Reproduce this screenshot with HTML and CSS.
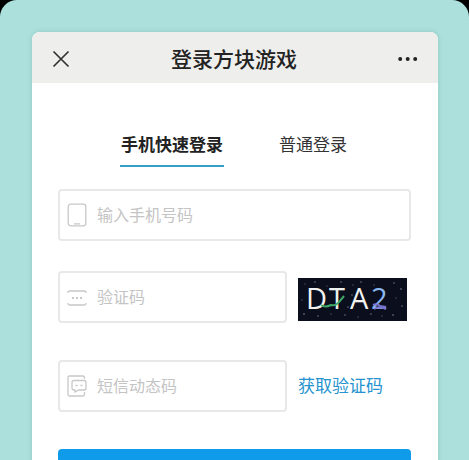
FILE: index.html
```
<!DOCTYPE html>
<html lang="zh-CN">
<head>
    <meta charset="UTF-8">
    <meta name="viewport" content="width=device-width, initial-scale=1.0">
    <title>登录方块游戏</title>
    <link rel="stylesheet" href="styles.css">
</head>
<body>
    <div class="page">
        <main class="card">
            <header class="card-header">
                <button type="button" class="icon-button" aria-label="关闭">
                    <svg width="18" height="18" viewBox="0 0 18 18" fill="none" stroke="#333" stroke-width="1.7">
                        <path d="M1.5 1.5L16.5 16.5M16.5 1.5L1.5 16.5"/>
                    </svg>
                </button>
                <h1>登录方块游戏</h1>
                <button type="button" class="icon-button" aria-label="更多">
                    <svg width="20" height="6" viewBox="0 0 20 6" fill="#222">
                        <circle cx="2.2" cy="3" r="2"/>
                        <circle cx="9.7" cy="3" r="2"/>
                        <circle cx="17.2" cy="3" r="2"/>
                    </svg>
                </button>
            </header>

            <nav class="tabs">
                <a href="#phone" class="tab active">手机快速登录</a>
                <a href="#normal" class="tab">普通登录</a>
            </nav>

            <form class="login-form">
                <div class="row">
                    <div class="field">
                        <label for="phone" aria-label="手机号码">
                            <svg width="20" height="24" viewBox="0 0 20 24" fill="none" stroke="#c8c8c8" stroke-width="1.3">
                                <rect x="1.2" y="1.2" width="17.6" height="21.6" rx="2.5"/>
                                <path d="M7 20.8H13"/>
                            </svg>
                        </label>
                        <input type="tel" id="phone" placeholder="输入手机号码">
                    </div>
                </div>

                <div class="row">
                    <div class="field">
                        <label for="captcha" aria-label="验证码">
                            <svg width="20" height="24" viewBox="0 0 20 24" fill="none" stroke="#c8c8c8" stroke-width="1.3">
                                <path d="M1 8V7.5Q1 6 2.5 6H17.5Q19 6 19 7.5V8M1 18V18.5Q1 20 2.5 20H17.5Q19 20 19 18.5V18"/>
                                <path d="M5 13H7M9 13H11M13 13H15" stroke-width="1.8"/>
                            </svg>
                        </label>
                        <input type="text" id="captcha" placeholder="验证码">
                    </div>
                    <div class="side">
                        <svg class="captcha" viewBox="0 0 109 43" role="img" aria-label="图形验证码">
                            <rect width="109" height="43" fill="#0b0e1c"/>
                            <g fill="#7d86a0">
                                <circle cx="7" cy="6" r=".6"/>
                                <circle cx="17" cy="4" r=".7"/>
                                <circle cx="29" cy="8" r=".5"/>
                                <circle cx="43" cy="4" r=".7"/>
                                <circle cx="55" cy="7" r=".6"/>
                                <circle cx="63" cy="4" r=".7"/>
                                <circle cx="76" cy="7" r=".6"/>
                                <circle cx="96" cy="5" r=".7"/>
                                <circle cx="103" cy="11" r=".8"/>
                                <circle cx="98" cy="20" r=".6"/>
                                <circle cx="104" cy="28" r=".7"/>
                                <circle cx="95" cy="37" r=".8"/>
                                <circle cx="84" cy="38" r=".6"/>
                                <circle cx="73" cy="36" r=".7"/>
                                <circle cx="60" cy="39" r=".6"/>
                                <circle cx="50" cy="29" r=".7"/>
                                <circle cx="47" cy="37" r=".7"/>
                                <circle cx="33" cy="36" r=".6"/>
                                <circle cx="20" cy="38" r=".7"/>
                                <circle cx="6" cy="36" r=".8"/>
                                <circle cx="4" cy="22" r=".6"/>
                                <circle cx="54" cy="17" r=".7"/>
                            </g>
                            <g class="captcha-text">
                                <text x="8" y="31" fill="#f2f2f2">D</text>
                                <text x="31" y="31" fill="#eef2ee">T</text>
                                <text x="52" y="31" fill="#f2f2f2">A</text>
                                <text x="73" y="31" fill="#8cb8f0">2</text>
                            </g>
                            <path d="M23 27Q27 30 33 27Q38 28 41 24L46 18" fill="none" stroke="#3fa968" stroke-width="2"/>
                            <path d="M75 27Q79 25 82 28L88 29M76 31Q81 28 88 31" fill="none" stroke="#7774d0" stroke-width="2"/>
                        </svg>
                    </div>
                </div>

                <div class="row row-sms">
                    <div class="field">
                        <label for="sms" aria-label="短信动态码">
                            <svg width="20" height="24" viewBox="0 0 20 24" fill="none" stroke="#c8c8c8" stroke-width="1.3">
                                <path d="M17.5 5V3.5Q17.5 2 16 2H2.5Q1 2 1 3.5V20.5Q1 22 2.5 22H16Q17.5 22 17.5 20.5V18"/>
                                <path d="M7 6.5H17Q19 6.5 19 8.5V14Q19 16 17 16H12L8 18V16H7Q5 16 5 14V8.5Q5 6.5 7 6.5Z"/>
                                <path d="M8.5 11.5H10.5M13.5 11.5H15.5"/>
                            </svg>
                        </label>
                        <input type="text" id="sms" placeholder="短信动态码">
                    </div>
                    <div class="side">
                        <button type="button" class="get-code">获取验证码</button>
                    </div>
                </div>

                <button type="submit" class="submit" aria-label="登录"></button>
            </form>
        </main>
    </div>
</body>
</html>
```

FILE: styles.css
```
* {
    box-sizing: border-box;
}

body {
    margin: 0;
    background: #000;
    font-family: "Noto Sans CJK SC", sans-serif;
    color: #222;
}

button {
    padding: 0;
    border: 0;
    background: none;
    font-family: inherit;
    cursor: pointer;
}

svg {
    display: block;
}

.page {
    height: 100vh;
    padding: 32px 31px 0 32px;
    overflow: hidden;
    background: #ace0dc;
    border-radius: 17px 17px 0 0;
}

.card {
    background: #fff;
    border-radius: 8px;
    box-shadow: 0 0 5px rgba(60, 130, 125, 0.25);
}

.card-header {
    display: flex;
    justify-content: space-between;
    align-items: center;
    height: 51px;
    padding: 2px 20px 0;
    background: #eeeeec;
    border-radius: 8px 8px 0 0;
}

h1 {
    margin: 0;
    padding-bottom: 2px;
    font-size: 21px;
    font-weight: 500;
    line-height: 32px;
}

/* Tabs */
.tabs {
    display: flex;
    justify-content: center;
    gap: 54px;
    padding: 50px 2px 0 0;
}

.tab {
    padding: 0 1px 10px;
    border-bottom: 2px solid transparent;
    color: #333;
    font-size: 17px;
    line-height: 22px;
    text-decoration: none;
}

.tab.active {
    border-color: #35a0cb;
    color: #222;
    font-weight: 700;
}

/* Form */
.login-form {
    padding: 22px 27px 32px 26px;
}

.row {
    display: flex;
    align-items: center;
    gap: 11px;
    margin-bottom: 30px;
}

.row-sms {
    margin: 37px 0;
}

.field {
    display: flex;
    flex: 1;
    align-items: center;
    gap: 10px;
    height: 52px;
    padding: 0 7px;
    border: 2px solid #e8e8e8;
    border-radius: 4px;
}

.field input {
    flex: 1;
    min-width: 0;
    padding: 0 0 2px;
    border: 0;
    outline: none;
    background: none;
    color: #333;
    font-family: inherit;
    font-size: 16px;
    line-height: 24px;
}

.field input::placeholder {
    color: #c4c4c4;
}

.side {
    flex: 0 0 113px;
}

.captcha {
    width: 109px;
    height: 43px;
    margin-top: 4px;
}

.captcha-text {
    font-family: "Open Sans", sans-serif;
    font-size: 29px;
}

.get-code {
    display: block;
    padding-bottom: 2px;
    color: #2493cf;
    font-size: 17px;
    line-height: 24px;
}

.submit {
    display: block;
    width: 100%;
    height: 52px;
    background: #109bea;
    border-radius: 4px;
}
```
